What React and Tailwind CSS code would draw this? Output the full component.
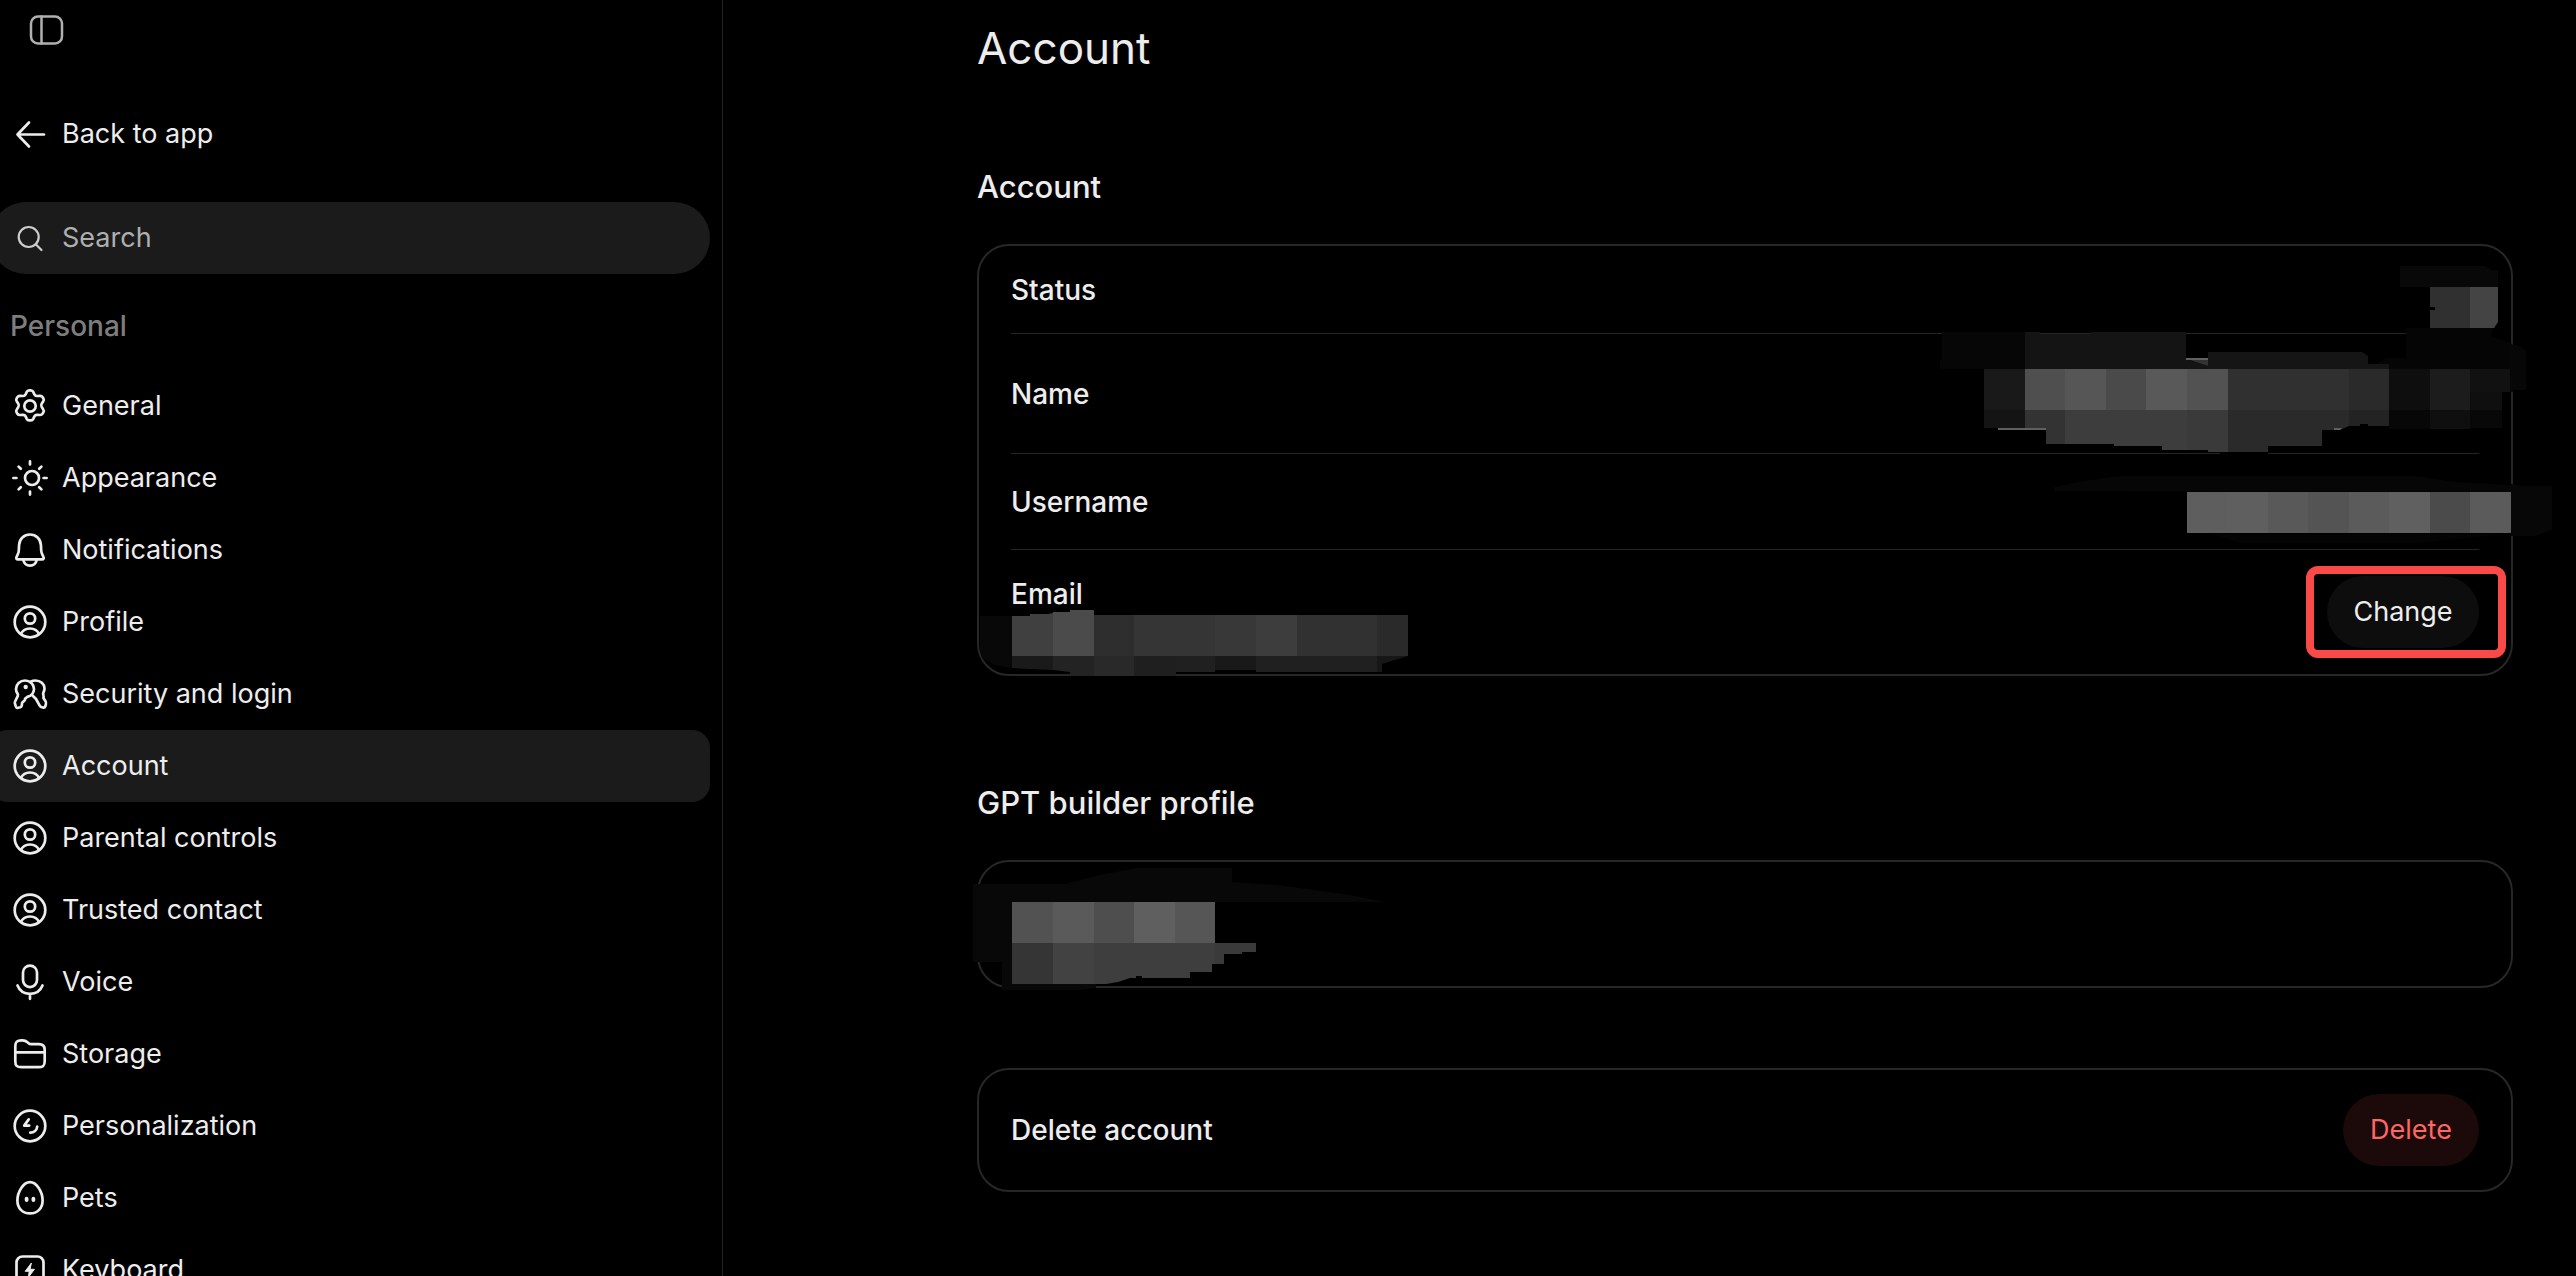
import { useState } from 'react'

const Icon = ({ children, className = 'size-10' }) => (
  <svg
    viewBox="0 0 40 40"
    className={`${className} shrink-0`}
    fill="none"
    stroke="currentColor"
    strokeWidth="2.7"
    strokeLinecap="round"
    strokeLinejoin="round"
    aria-hidden="true"
  >
    {children}
  </svg>
)

const PanelIcon = () => (
  <Icon>
    <rect x="5" y="6.5" width="31" height="27" rx="7" strokeWidth="2.5" />
    <path d="M15.5 6.5v27" strokeWidth="2.5" />
  </Icon>
)

const ArrowIcon = () => (
  <Icon>
    <path d="M19 8.500 7.500 20.500l11.500 12M7.500 20.500h26.500" />
  </Icon>
)

const SearchIcon = () => (
  <Icon>
    <circle cx="18.700" cy="19" r="10" strokeWidth="2.2" />
    <path d="m26 26.500 5.500 5.500" strokeWidth="2.2" />
  </Icon>
)

const GearIcon = () => (
  <Icon>
    <circle cx="20" cy="20" r="5.7" />
    <path d="M16.600 6.200C17.200 5 18 4.400 19.200 4.400h1.600c1.200 0 2 .6 2.600 1.800l1 2.200c.6 1.200 1.500 1.700 2.800 1.600l2.500-.2c1.400-.1 2.300.3 2.900 1.300l.8 1.400c.6 1 .5 2-.3 3.100l-1.400 2.100c-.8 1.200-.8 2.200 0 3.400l1.400 2.100c.8 1.100.9 2.100.3 3.100l-.8 1.400c-.6 1-1.500 1.400-2.900 1.300l-2.500-.2c-1.300-.1-2.200.4-2.800 1.600l-1 2.200c-.6 1.200-1.400 1.800-2.600 1.800h-1.600c-1.200 0-2-.6-2.600-1.800l-1-2.200c-.6-1.200-1.500-1.700-2.800-1.600l-2.500.2c-1.400.1-2.300-.3-2.900-1.300l-.8-1.400c-.6-1-.5-2 .3-3.100l1.400-2.100c.8-1.200.8-2.200 0-3.400l-1.400-2.100c-.8-1.100-.9-2.100-.3-3.100l.8-1.400c.6-1 1.500-1.400 2.900-1.300l2.500.2c1.300.1 2.200-.4 2.800-1.600z" />
  </Icon>
)

const SunIcon = () => (
  <Icon>
    <circle cx="22" cy="20" r="7" />
    <path d="M20 3.400v3M20 33.600v3M3.400 20h3M33.600 20h3M8.600 8.600l2.200 2.200M29.200 29.200l2.200 2.200M8.600 31.400l2.200-2.200M29.200 10.800l2.200-2.200" />
  </Icon>
)

const BellIcon = () => (
  <Icon>
    <path d="M20 4.500c-6 0-10.600 4.400-10.900 10.400l-.3 5.600c-.1 1.400-.4 2.500-1 3.700l-1.300 2.900c-.6 1.200.1 2.300 1.400 2.300h24.200c1.300 0 2-1.100 1.400-2.300l-1.300-2.900c-.6-1.200-.9-2.300-1-3.700l-.3-5.600C30.600 8.900 26 4.500 20 4.500z" />
    <path d="M13.300 30c.8 3.600 3.500 5.600 6.700 5.600s5.900-2 6.700-5.600" />
  </Icon>
)

const UserIcon = () => (
  <Icon>
    <circle cx="20" cy="20" r="15.3" />
    <circle cx="20" cy="16.5" r="5.2" />
    <path d="M11 31.800c1.600-3.300 5-5.300 9-5.300s7.400 2 9 5.300" />
  </Icon>
)

const KeysIcon = () => (
  <Icon>
    <path d="M15 6.500c-5 0-9 3.800-9 8.500 0 1.800.5 3.200 1.500 4.600.6.900.6 1.600.2 2.600l-2.600 5.300c-.5 1-.4 1.900.1 2.900l.7 2.200c.4 1.100 1.200 1.500 2.300 1.200l2-.6c.9-.3 1.500-1 1.600-1.900l.3-2.500 2.200-2c.6-.6.8-1.200.7-2l2.200-1.900c4-.8 6.800-4 6.800-7.900 0-4.700-4-8.500-9-8.500z" />
    <path d="M20.500 7.700c1.600-.8 3.200-1.200 5-1.200 5 0 9 3.600 9 8 0 1.400-.3 2.500-1 3.700-.5.900-.5 1.500-.2 2.400l.3 1.400c.2.700 0 1.200-.2 1.900l2 3c.7 1.200.8 2.100.5 3.200l-.6 2.200c-.4 1.200-1.200 1.600-2.400 1.200l-1.700-.6c-.9-.3-1.400-.9-1.800-1.700L26 25l-3.500-3.500" />
    <circle cx="15.7" cy="13" r="2.2" fill="currentColor" stroke="none" />
  </Icon>
)

const MicIcon = () => (
  <Icon>
    <rect x="13" y="3.600" width="14" height="21.500" rx="7" />
    <path d="M7.500 23.500c2 5 6.700 8.300 12.500 8.300s10.500-3.300 12.500-8.300M20 31.800v5" />
  </Icon>
)

const FolderIcon = () => (
  <Icon>
    <path d="M5.300 12.300c0-4.400 1.900-6 6-6h1.200c2.300 0 3.500.6 5 2l.8.700c1 .9 1.800 1.200 3.200 1.200h7.200c4.100 0 6 1.600 6 5.700v11.300c0 4.400-1.600 6-6 6H11.300c-4.400 0-6-1.600-6-6zM5.300 18.300h29.400" />
  </Icon>
)

const PersonalizationIcon = () => (
  <Icon>
    <circle cx="20" cy="20" r="15.3" />
    <path d="M18.700 13.400 14.200 19.600h5M27.200 20.700c-.4 3.500-3.200 6-6.900 6" />
  </Icon>
)

const EggIcon = () => (
  <Icon>
    <path d="M20 4.200c-6.400 0-12.600 9.200-12.600 18.200 0 7.800 5.200 13 12.600 13s12.600-5.200 12.600-13C32.600 13.400 26.400 4.200 20 4.200z" />
    <path d="M16.600 20.700v1.400M23.400 20.700v1.400" strokeWidth="3.8" />
  </Icon>
)

const KeyboardIcon = () => (
  <Icon>
    <rect x="6.5" y="6.5" width="27" height="27" rx="6" />
    <path d="m21.200 13.300-6 8h4l-.8 6 6-8h-4z" fill="currentColor" strokeWidth="1" />
  </Icon>
)

const navItems = [
  { label: 'General', icon: GearIcon },
  { label: 'Appearance', icon: SunIcon },
  { label: 'Notifications', icon: BellIcon },
  { label: 'Profile', icon: UserIcon },
  { label: 'Security and login', icon: KeysIcon },
  { label: 'Account', icon: UserIcon },
  { label: 'Parental controls', icon: UserIcon },
  { label: 'Trusted contact', icon: UserIcon },
  { label: 'Voice', icon: MicIcon },
  { label: 'Storage', icon: FolderIcon },
  { label: 'Personalization', icon: PersonalizationIcon },
  { label: 'Pets', icon: EggIcon },
  { label: 'Keyboard', icon: KeyboardIcon },
]

// cells: [x, y, width, height, fill]
const Cells = ({ cells }) =>
  cells.map(([x, y, width, height, fill]) => (
    <rect key={`${x}-${y}`} x={x} y={y} width={width} height={height} fill={fill} />
  ))

const StatusMask = () => (
  <svg viewBox="2400 266 98 62" className="absolute top-5 -right-[19px] w-[98px] h-[62px]" aria-hidden="true">
    <path d="M2400 266h85l6 4h7v17h-98z" fill="#080808" />
    <path d="M2430 287h40v41h-40v-18h5v-3h-5z" fill="#303030" />
    <path d="M2470 287h28v35l-4 6h-24z" fill="#444444" />
  </svg>
)

const NameMask = () => (
  <svg viewBox="1940 328 586 126" className="absolute -top-[6px] -right-[47px] w-[586px] h-[126px]" aria-hidden="true">
    <path d="M1942 332h83v37h-85v-9h2z" fill="#060606" />
    <path d="M2025 332h15v2h50v-2h96v27l22 7v3h-183z" fill="#141414" />
    <path d="M2186 358h22v2h-22z" fill="#606060" />
    <path d="M2190 360h18v6z" fill="#333333" />
    <path d="M2208 352h154l6 4v8h21v5h-181z" fill="#151515" />
    <path d="M2376 364l10-6h20v-30h88l-3 8 21 8v25h-123v-5z" fill="#050505" />
    <path d="M2510 344l10 2 6 6v38h-12v2h-4z" fill="#070707" />
    <Cells
      cells={[
        [1984, 369, 41, 41, '#191919'],
        [2025, 369, 40, 41, '#4f4f4f'],
        [2065, 369, 41, 41, '#565656'],
        [2106, 369, 40, 41, '#4a4a4a'],
        [2146, 369, 41, 41, '#595959'],
        [2187, 369, 41, 41, '#525252'],
        [2228, 369, 121, 41, '#303030'],
        [2349, 369, 40, 41, '#2a2a2a'],
        [2389, 369, 41, 41, '#0e0e0e'],
        [2430, 369, 40, 41, '#1c1c1c'],
        [2470, 369, 40, 23, '#111111'],
        [2470, 392, 32, 18, '#0f0f0f'],
        [1984, 410, 41, 18, '#141414'],
        [2389, 410, 41, 19, '#070707'],
        [2430, 410, 40, 19, '#0f0f0f'],
        [2470, 410, 32, 18, '#080808'],
        [1998, 428, 48, 2, '#606060'],
        [2220, 452, 48, 2, '#000000'],
      ]}
    />
    <path d="M2025 410h40v34h-19v-16h-21z" fill="#333333" />
    <path d="M2065 410h122v40h-25v-4h-48v-2h-49z" fill="#3d3d3d" />
    <path d="M2187 410h41v42h-20v-2h-21z" fill="#3a3a3a" />
    <path d="M2228 410h121v16l-9 4h-18v16h-54v6h-40z" fill="#2a2a2a" />
    <path d="M2349 410h40v16h-21v-2h-8v2h-11z" fill="#232323" />
    <path d="M2334 428h8l-2 2h-6z" fill="#606060" />
  </svg>
)

const UsernameMask = () => (
  <svg viewBox="2054 476 498 68" className="absolute top-[22px] -right-[73px] w-[498px] h-[68px]" aria-hidden="true">
    <path d="M2054 491v-4l24-5 40-6h298l40 6 56 3v7z" fill="#060606" />
    <path d="M2210 534l30 9h178l92-9z" fill="#040404" />
    <path d="M2511 484l10 2h31v44l-17 6h-24z" fill="#070707" />
    <Cells
      cells={[
        [2187, 492, 40, 41, '#5e5e5e'],
        [2227, 492, 41, 41, '#5f5f5f'],
        [2268, 492, 40, 41, '#595959'],
        [2308, 492, 41, 41, '#545454'],
        [2349, 492, 40, 41, '#5b5b5b'],
        [2389, 492, 41, 41, '#606060'],
        [2430, 492, 40, 41, '#4b4b4b'],
        [2470, 492, 41, 41, '#5b5b5b'],
      ]}
    />
  </svg>
)

const EmailMask = () => (
  <svg viewBox="980 610 428 66" className="absolute top-[60px] -left-[31px] w-[428px] h-[66px]" aria-hidden="true">
    <path d="M980 616h32v52l-17-3-13-7-2-8z" fill="#080808" />
    <path d="M1012 616h18v-2h18l5-1v43h-41z" fill="#404040" />
    <path d="M1053 612h17v-2h24v46h-41z" fill="#4b4b4b" />
    <Cells
      cells={[
        [1094, 615, 40, 41, '#2e2e2e'],
        [1134, 615, 81, 41, '#353535'],
        [1215, 615, 41, 41, '#383838'],
        [1256, 615, 41, 41, '#3d3d3d'],
        [1297, 615, 80, 41, '#313131'],
        [1377, 615, 31, 41, '#2a2a2a'],
        [1094, 656, 40, 20, '#292929'],
        [1134, 656, 42, 20, '#1f1f1f'],
        [1176, 656, 39, 16, '#202020'],
        [1215, 656, 41, 14, '#191919'],
        [1256, 656, 121, 16, '#202020'],
      ]}
    />
    <path d="M1012 656h41v14l-23-1-18-1z" fill="#1a1a1a" />
    <path d="M1053 656h41v20h-24v-4l-17-2z" fill="#232323" />
    <path d="M1377 656h31l-13 4-13 4v8h-5z" fill="#171717" />
  </svg>
)

const BuilderMask = () => (
  <svg viewBox="973 868 412 122" className="absolute top-[6px] -left-[6px] w-[412px] h-[122px]" aria-hidden="true">
    <path d="M973 884h92l35-9 36-7h96v14l46 3 72 10 35 7H1012v82h84v4l-18 2h-76v-28h-29z" fill="#080808" />
    <Cells
      cells={[
        [1012, 902, 41, 41, '#525252'],
        [1053, 902, 41, 41, '#5a5a5a'],
        [1094, 902, 40, 41, '#4e4e4e'],
        [1134, 902, 41, 41, '#5f5f5f'],
        [1175, 902, 40, 41, '#565656'],
        [1012, 943, 41, 41, '#353535'],
        [1053, 943, 41, 41, '#424242'],
      ]}
    />
    <path d="M1094 943h121v21h-3v8h-22v6h-48v-2h-6v2h-6l-12 4-12 2h-12z" fill="#3e3e3e" />
    <path d="M1215 943h41v9h-14v2h-18v10h-9z" fill="#3a3a3a" />
  </svg>
)

const Sidebar = ({ active, onSelect }) => (
  <aside className="w-[723px] shrink-0 border-r border-[#242424] overflow-hidden">
    <div className="-ml-[10px] mr-3">
      <button type="button" aria-label="Toggle sidebar" className="block ml-9 mt-[10px] text-[#b0b0b0]">
        <PanelIcon />
      </button>
      <a href="#app" className="mt-12 h-[72px] flex items-center gap-3 pl-5">
        <ArrowIcon />
        Back to app
      </a>
      <label className="mt-8 h-[72px] flex items-center gap-3 pl-5 pr-8 rounded-full bg-[#1b1b1b] text-[#cdcdcd]">
        <SearchIcon />
        <input
          type="search"
          placeholder="Search"
          aria-label="Search"
          className="flex-1 min-w-0 bg-transparent outline-none placeholder:text-[#afafaf]"
        />
      </label>
      <h2 className="mt-8 mb-6 ml-5 text-[28px] leading-10 font-medium text-[#7e7e7e]">Personal</h2>
      <nav>
        {navItems.map(({ label, icon: ItemIcon }) => (
          <button
            key={label}
            type="button"
            onClick={() => onSelect(label)}
            className={`w-full h-[72px] flex items-center gap-3 pl-5 rounded-[18px] text-left ${
              active === label ? 'bg-[#1b1b1b]' : ''
            }`}
          >
            <ItemIcon />
            {label}
          </button>
        ))}
      </nav>
    </div>
  </aside>
)

const Card = ({ children }) => (
  <div className="relative border-2 border-[#272727] rounded-[32px] px-8 text-[28px]">{children}</div>
)

const Main = () => (
  <main className="flex-1 min-w-0 overflow-hidden pl-[254px] pr-[63px]">
    <h1 className="mt-4 text-[44px] leading-16">Account</h1>

    <h2 className="mt-[87px] mb-[37px] text-[31px] leading-10 font-medium">Account</h2>
    <Card>
      <div className="relative h-[88px] flex items-center border-b border-[#242424] font-medium">
        Status
        <StatusMask />
      </div>
      <div className="relative h-[120px] flex items-center border-b border-[#242424] font-medium">
        Name
        <NameMask />
      </div>
      <div className="relative h-24 flex items-center border-b border-[#242424] font-medium">
        Username
        <UsernameMask />
      </div>
      <div className="relative h-[124px] flex items-center justify-between">
        <span className="self-start mt-6 font-medium">Email</span>
        <EmailMask />
        <div className="relative">
          <button type="button" className="h-[72px] w-[152px] rounded-full bg-[#0d0d0d] text-[27px]">
            Change
          </button>
          <div className="absolute -top-[10px] -bottom-[10px] -left-[21px] -right-[27px] border-8 border-[#f94a47] rounded-xl pointer-events-none" />
        </div>
      </div>
    </Card>

    <h2 className="mt-[107px] mb-[37px] text-[31px] leading-10 font-medium">GPT builder profile</h2>
    <Card>
      <div className="h-[124px]" />
      <BuilderMask />
    </Card>

    <div className="mt-20">
      <Card>
        <div className="h-[120px] flex items-center justify-between">
          <span className="font-medium">Delete account</span>
          <button type="button" className="h-[72px] w-[136px] rounded-full bg-[#1c0a0a] text-[27px] text-[#ff6764]">
            Delete
          </button>
        </div>
      </Card>
    </div>
  </main>
)

const App = () => {
  const [active, setActive] = useState('Account')

  return (
    <div className="flex h-screen overflow-hidden bg-black text-[#ededed] text-[27px] leading-10 font-[Inter,sans-serif]">
      <Sidebar active={active} onSelect={setActive} />
      <Main />
    </div>
  )
}

export default App
